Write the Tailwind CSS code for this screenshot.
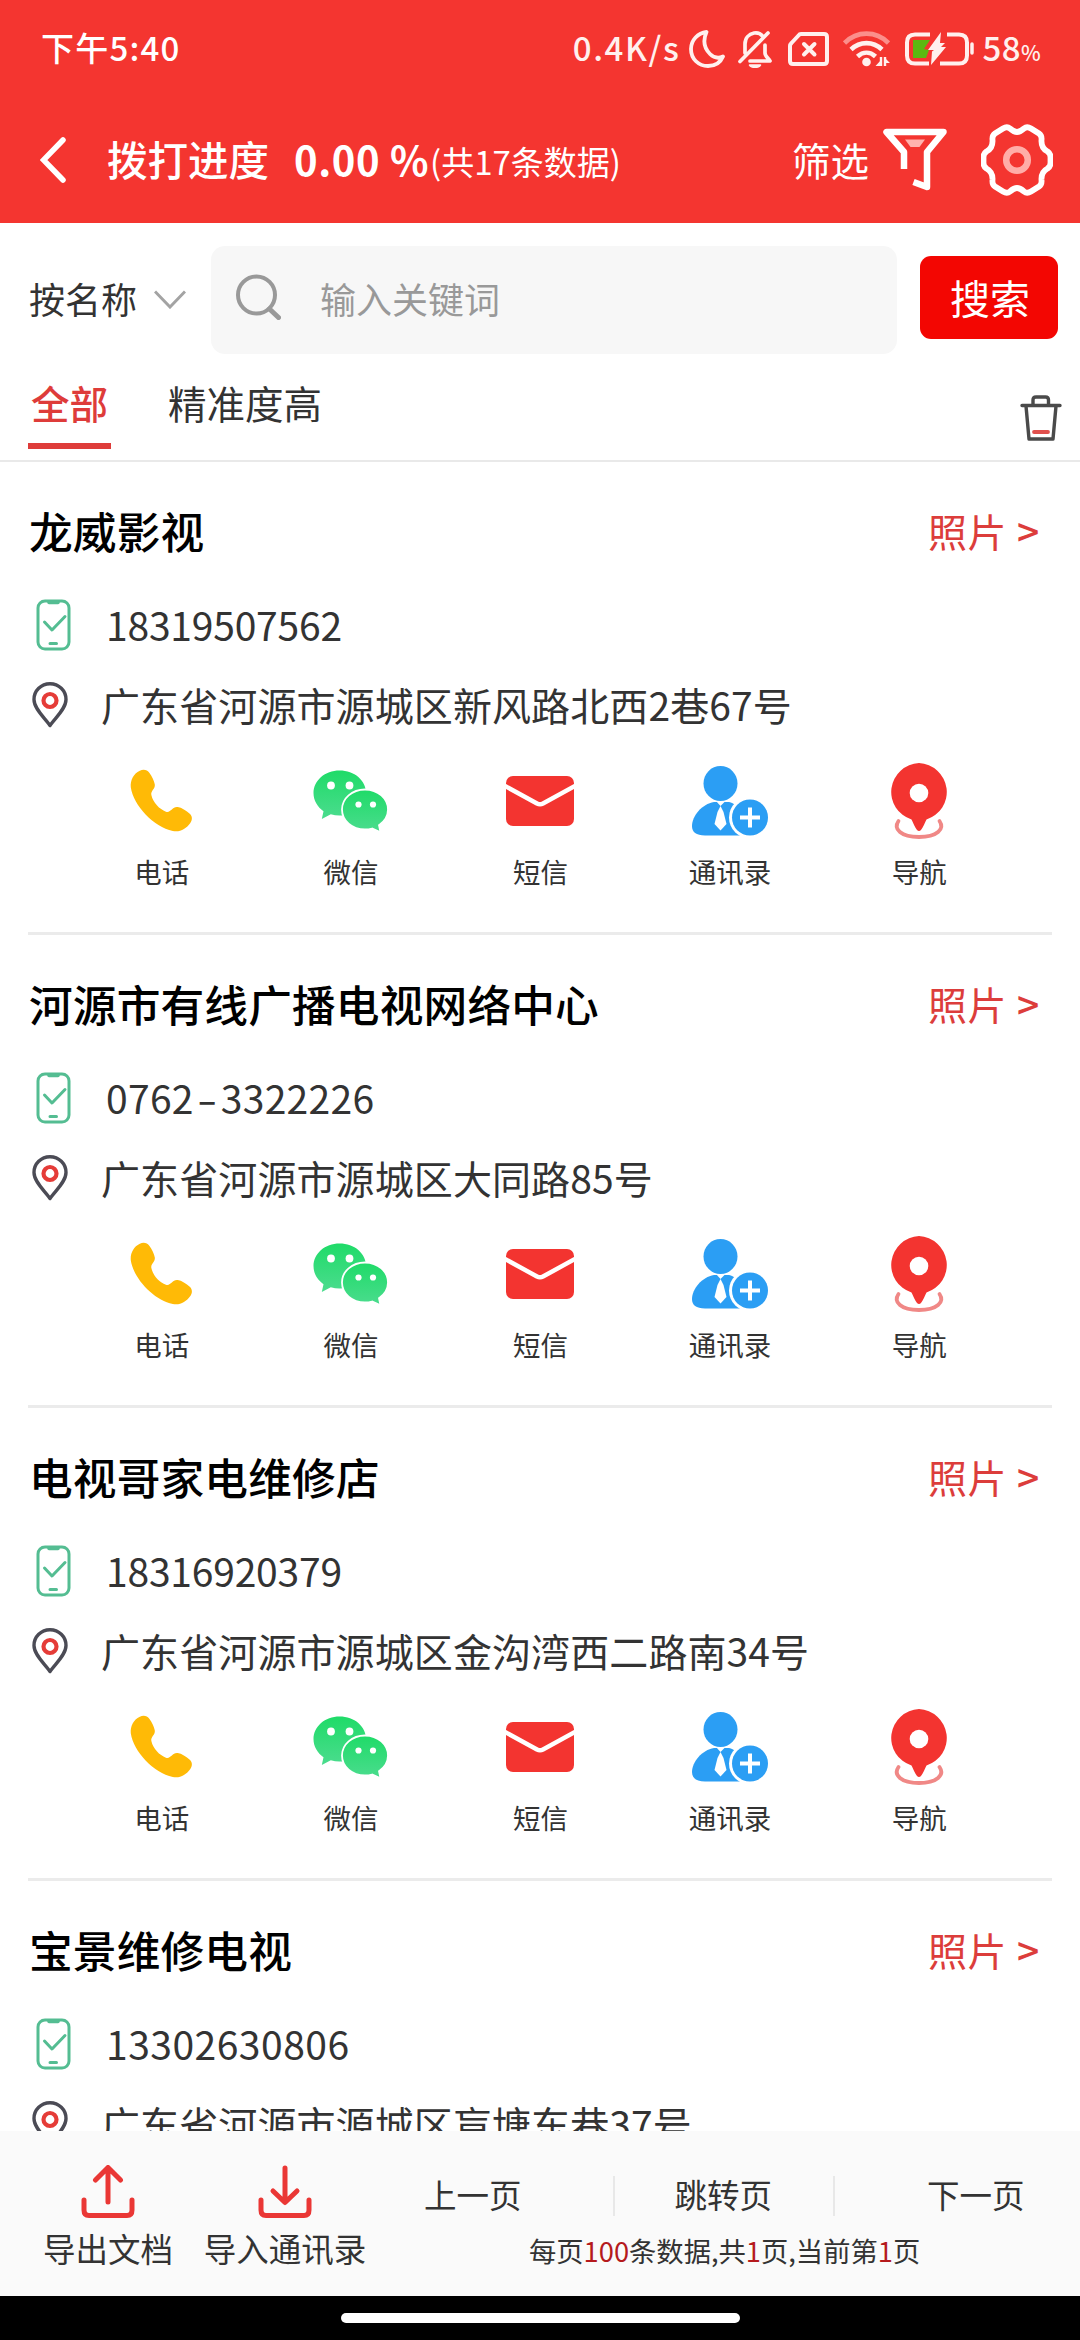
<!DOCTYPE html>
<html lang="zh-CN">
<head>
<meta charset="utf-8">
<title>拨打进度</title>
<script src="https://cdn.jsdelivr.net/npm/@tailwindcss/browser@4"></script>
</head>
<body class="w-[1080px] h-[2340px] overflow-hidden bg-white text-[#333] font-['Noto_Sans_CJK_SC',sans-serif]">
<svg class="absolute size-0">
  <defs><linearGradient id="wg" x1="0" y1="0" x2="0" y2="1"><stop offset="0" stop-color="#1fdb68"/><stop offset="1" stop-color="#4bdc8e"/></linearGradient></defs>
  <symbol id="phone-ok" viewBox="0 0 36 52"><g fill="none" stroke="#54bd92" stroke-width="3" stroke-linecap="round" stroke-linejoin="round"><rect x="2" y="2" width="31" height="48" rx="7"/><path d="M8.5 23l7.500 8L29 17.500M14 44.500h6.500"/><path d="M13 3.500h9" stroke-width="3.500"/></g></symbol>
  <symbol id="pin" viewBox="0 0 36 46"><path d="M18 43.500C13 36 2 27 2 17.500a16 15.800 0 0 1 32 0C34 27 23 36 18 43.500z" fill="none" stroke="#4b4b55" stroke-width="3.400" stroke-linejoin="round"/><circle cx="18" cy="18.500" r="6.500" fill="none" stroke="#e53c38" stroke-width="4.200"/></symbol>
  <symbol id="call" viewBox="0 0 64 64"><path d="M10 1.200c4-1.700 7.500-.700 9.800 2.300 2.600 3.500 4.800 8 5.400 11.800.6 4.600-4.400 6.200-3.500 10.700C23.500 34 30 40.500 36.500 42.800c5 1.700 6.400-5.400 12-4.600 3.800.6 8.800 3.600 12.200 6.800 3 2.800 2.600 6.400.600 9.400C57 60.500 50.500 64 43.500 62.500 24 58.500 3.500 36.500.800 18 .200 11 3.500 4.200 10 1.200z" fill="#ffba06"/></symbol>
  <symbol id="wechat" viewBox="0 0 76 62"><path d="M26.500.500C12 .500.500 10.500.500 23c0 7.500 4 14 10 18.200L8.800 49l9-4.700c2.800.8 5.700 1.200 8.700 1.200 15 0 26.500-10 26.500-22.500S41.500.500 26.500.500z" fill="url(#wg)"/><path d="M52 19.500c-13 0-23 8.900-23 20s10 20 23 20c2.500 0 5-.4 7.200-1l8.300 3.800-1.500-7.100c5.500-3.700 9-9.300 9-15.700 0-11.100-10-20-23-20z" fill="url(#wg)" stroke="#fff" stroke-width="1.800"/><g fill="#fff"><circle cx="18" cy="15.500" r="3.900"/><circle cx="36.500" cy="15.500" r="3.900"/><circle cx="45.500" cy="34.500" r="3.100"/><circle cx="60" cy="34.500" r="3.100"/></g></symbol>
  <symbol id="mail" viewBox="0 0 68 50"><rect width="68" height="50" rx="7" fill="#f33430"/><path d="M-1 10L31 27.500q3 1.600 6 0L69 10" fill="none" stroke="#fff" stroke-width="4.500"/></symbol>
  <symbol id="contact" viewBox="0 0 76 70"><g fill="#2b9ef4"><ellipse cx="28.500" cy="17.500" rx="17" ry="17.500"/><path d="M22 36h15c5 1 9 5 12 10v23.500H13C4 69.500 0 66 0 60c0-10 10-22 22-24z"/></g><path d="M24 35l4.500 5 5-5z" fill="#fff"/><path d="M28.500 40l3 6 3 12-6 6.500L22.500 58l3-12z" fill="#fff"/><circle cx="58" cy="51.500" r="21" fill="#fff"/><circle cx="58" cy="51.500" r="18" fill="#2b9ef4"/><path d="M58 41.500v20M48 51.500h20" stroke="#fff" stroke-width="4"/></symbol>
  <symbol id="nav" viewBox="0 0 60 76"><path d="M9.500 58C4 66 12 74 30 74s26-8 20.500-16" fill="none" stroke="#f08886" stroke-width="3.800" stroke-linecap="round"/><path d="M30 0a29.500 29 0 0 1 7.500 56.500c-1.500 3-3.500 8-5.500 10.500q-2 2-4 0c-2-2.500-4-7.500-5.500-10.500A29.500 29 0 0 1 30 0z" fill="#f33430"/><circle cx="30" cy="30" r="9.300" fill="#fff"/></symbol>
</svg>

<header class="h-[223px] bg-[#f43530] text-white flex flex-col">
  <div class="h-[97px] pl-[41px] pr-[39px] flex items-center justify-between text-[33px] font-medium leading-none">
    <span class="tracking-[1.2px] -mt-[2px]">下午5:40</span>
    <div class="flex items-center text-[#fff0ee]">
      <span class="tracking-[1.6px] mr-[9px] -mt-[2px]">0.4K/s</span>
      <svg class="w-[36px] h-[38px] mr-[12px]" viewBox="0 0 36 38" fill="none" stroke="currentColor" stroke-width="3.800" stroke-linejoin="round"><path d="M17.500 2C9 3 2 10 2 19c0 10 7.500 17 17 17 7 0 12.500-3.500 15-9.500-4 2-9 1.500-13-2.500C15 18 14 10 17.500 2z"/></svg>
      <svg class="w-[36px] h-[38px] mr-[15px]" viewBox="0 0 36 38" fill="none" stroke="currentColor" stroke-width="3.700" stroke-linecap="round" stroke-linejoin="round"><path d="M31 3L3 31.500M8 23v-9c0-6 4-10 9-11 3-.5 6.500.5 8.500 3M28 15v8c0 3 3 5 5 8H13"/><path d="M12.500 35h11c-2 3-9 3-11 0z" fill="currentColor" stroke-width="1.500"/></svg>
      <svg class="w-[41px] h-[34px] mr-[14px]" viewBox="0 0 41 34" fill="none" stroke="currentColor" stroke-width="4" stroke-linejoin="round"><path d="M13 2h23q3 0 3 3v24q0 3-3 3H5q-3 0-3-3V14q0-1.500 1.500-3L10.500 3.500Q11.500 2 13 2z"/><path d="M16 12l10.500 10.500M26.500 12L16 22.500" stroke-linecap="round"/></svg>
      <svg class="w-[47px] h-[36px] mr-[15px]" viewBox="0 0 47 36" fill="none" stroke="currentColor" stroke-width="4.600"><path d="M1.500 12C14-.500 33-.500 45.500 12" stroke="#fb8f8b"/><path d="M8 18.500c9-8.500 22-8.500 31 0M14.500 25.500c5.500-5 12.500-5 18 0"/><circle cx="23.500" cy="31" r="4.300" fill="currentColor" stroke="none"/><path d="M38 26v9M42 26v9" stroke-width="2.400"/><path d="M38.500 35h-6l6-6.500zM41 26l6 6h-6z" fill="currentColor" stroke="none"/></svg>
      <svg class="w-[69px] h-[34px] mr-[8px]" viewBox="0 0 69 34" fill="none" stroke="currentColor" stroke-width="4"><path d="M25 2.500H10q-8 0-8 8v13q0 8 8 8h14M42 2.500h12q8 0 8 8v13q0 8-8 8H35"/><path d="M67 12v9" stroke-linecap="round" stroke-width="3.500"/><path d="M8 8h17l-6 9 5 1-3 8H8z" fill="#5cb811" stroke="none"/><path d="M36 0L23 18h6l-2 1.500L26 33l15-18h-5l4-4h-5z" fill="currentColor" stroke="none"/></svg>
      <span class="tracking-[0.4px] -mt-[2px]">58<span class="text-[21px]">%</span></span>
    </div>
  </div>
  <div class="h-[125px] pl-[40px] pr-[27px] flex items-center leading-none">
    <svg class="w-[27px] h-[46px] mr-[40px]" viewBox="0 0 27 46" fill="none" stroke="#fff" stroke-width="5.500" stroke-linecap="round"><path d="M23 3L3.500 23 23 43"/></svg>
    <h1 class="text-[40.500px] font-medium -mt-[1px]">拨打进度</h1>
    <span class="text-[40px] font-bold ml-[25px] whitespace-nowrap tracking-[0.6px] -mt-[1px]">0.00 %</span>
    <span class="text-[33px] whitespace-nowrap mt-[3px] ml-[1px]">(共17条数据)</span>
    <span class="text-[38.500px] ml-auto mr-[14px] -mt-[1px]">筛选</span>
    <svg class="w-[64px] h-[64px] mr-[34px]" viewBox="0 0 64 64" fill="none" stroke="#fff" stroke-width="6.500"><path d="M21 41V24L3.500 4h57L44 24v35L30.500 54" stroke-linejoin="round"/><path d="M22 11.500h20l-5.500 7.500h-9z" fill="#ffb3ae" stroke="none"/></svg>
    <svg class="w-[72px] h-[72px]" viewBox="0 0 72 72" fill="none"><path d="M29 4.500q4 3.500 7 3.500t7-3.500q3-2.500 7 0l8 5q3 2 2.500 6.500-.5 8 6 11.500 3 2 3 5.500v6q0 3.500-3 5.500-6.500 3.500-6 11.500.5 4.500-2.500 6.500l-8 5q-4 2.500-7 0-4-3.500-7-3.500t-7 3.500q-3 2.500-7 0l-8-5q-3-2-2.500-6.500.5-8-6-11.500-3-2-3-5.500v-6q0-3.500 3-5.500 6.500-3.500 6-11.500-.5-4.500 2.500-6.500l8-5q4-2.500 7 0z" stroke="#fff" stroke-width="5.800"/><circle cx="36" cy="36" r="10.800" stroke="#ffada8" stroke-width="6.500"/></svg>
  </div>
</header>

<section class="h-[131px] pt-[23px] pl-[29px] pr-[22px] flex text-[36px] leading-none">
  <div class="flex items-center h-[108px] w-[182px]">
    <span class="-mt-[5px]">按名称</span>
    <svg class="w-[32px] h-[19px] ml-[17px] -mt-[2px]" viewBox="0 0 32 19" fill="none" stroke="#a3a3a3" stroke-width="3"><path d="M1 1.500L16 17 31 1.500"/></svg>
  </div>
  <div class="w-[686px] h-[108px] rounded-[14px] bg-[#f7f7f7] flex items-center pl-[25px] text-[#999]">
    <svg class="w-[45px] h-[46px] mr-[39px] -mt-[6px]" viewBox="0 0 45 46" fill="none" stroke="#999" stroke-width="4"><circle cx="20.500" cy="21" r="18.500"/><path d="M33.500 35l9 8.500" stroke-width="5" stroke-linecap="round"/></svg>
    <span class="-mt-[5px]">输入关键词</span>
  </div>
  <button class="ml-[23px] mt-[10px] w-[138px] h-[83px] rounded-[11px] bg-[#f30602] text-white text-[40px] leading-[79px] pl-[2px]">搜索</button>
</section>

<nav class="h-[108px] border-b-[2px] border-[#e9e9e9] pl-[28px] pr-[18px] flex text-[38.500px]">
  <div class="w-[83px] h-[95px] border-b-[6px] border-[#de3c3a] text-[#de3c3a] text-center font-medium leading-[96px]">全部</div>
  <div class="ml-[57px] leading-[96px]">精准度高</div>
  <svg class="w-[42px] h-[46px] ml-auto mt-[41px]" viewBox="0 0 42 46" fill="none" stroke="#4a4a4a" stroke-width="3.400" stroke-linecap="round" stroke-linejoin="round"><path d="M2 10.500h38M6 11l3 33h24l3-33M13 10V5q0-3 3-3h9.500q3 0 3 3v5"/><path d="M14 37h14" stroke="#e0504d" stroke-width="3.800"/></svg>
</nav>

<main id="list" class="h-[1669px] overflow-hidden px-[28px]"></main>

<footer class="h-[165px] bg-[#fafafa] flex text-[32.500px] leading-none whitespace-nowrap">
  <div class="w-[216px] pt-[34px] flex flex-col items-center">
    <svg class="w-[54px] h-[53px]" viewBox="0 0 54 53" fill="none" stroke="#ea3735" stroke-width="5" stroke-linecap="round" stroke-linejoin="round"><path d="M27 37V3M14.500 15L27 2.500 39.500 15M3 35v10q0 5.500 5 5.500h38q5 0 5-5.500V35"/></svg>
    <span class="mt-[14px]">导出文档</span>
  </div>
  <div class="w-[138px] pt-[34px] flex flex-col items-center">
    <svg class="w-[54px] h-[53px]" viewBox="0 0 54 53" fill="none" stroke="#ea3735" stroke-width="5" stroke-linecap="round" stroke-linejoin="round"><path d="M27 3v34M15 26l12 11.500L39 26M3 35v10q0 5.500 5 5.500h38q5 0 5-5.500V35"/></svg>
    <span class="mt-[14px]">导入通讯录</span>
  </div>
  <div class="w-[726px] pt-[45px]">
    <div class="flex items-center h-[40px]">
      <span class="ml-[70px] -mt-[3px]">上一页</span>
      <i class="ml-[91px] w-[2px] h-[40px] bg-[#e8e8e8]"></i>
      <span class="ml-[60px] -mt-[3px]">跳转页</span>
      <i class="ml-[61px] w-[2px] h-[40px] bg-[#e8e8e8]"></i>
      <span class="ml-[92px] -mt-[3px]">下一页</span>
    </div>
    <p class="mt-[21px] ml-[175px] text-[27.300px]">每页<span class="text-[#b51a1d]">100</span>条数据,共<span class="text-[#b51a1d]">1</span>页,当前第<span class="text-[#b51a1d]">1</span>页</p>
  </div>
</footer>
<div class="h-[44px] bg-black pt-[17px]"><div class="mx-auto w-[399px] h-[10px] rounded-full bg-white"></div></div>

<script>
const shops = [
  ['龙威影视', '18319507562', '广东省河源市源城区新风路北西2巷67号', 'tracking-[-0.2px]'],
  ['河源市有线广播电视网络中心', '0762<span class="inline-block w-[27px] text-center scale-x-150">-</span>3322226', '广东省河源市源城区大同路85号', 'tracking-[0.3px]'],
  ['电视哥家电维修店', '18316920379', '广东省河源市源城区金沟湾西二路南34号', 'tracking-[-0.2px]'],
  ['宝景维修电视', '13302630806', '广东省河源市源城区盲塘东巷37号', 'tracking-[0.5px]'],
];
document.getElementById('list').innerHTML = shops.map(([name, tel, addr, spacing]) => `
<article class="h-[473px] border-b-[3px] border-[#ebebeb] leading-none whitespace-nowrap">
  <div class="h-[138px] pl-[1px] pr-[13px] flex items-center justify-between">
    <h2 class="text-[43.700px] text-black font-medium tracking-[0.15px] -mt-[1px]">${name}</h2>
    <span class="text-[39px] text-[#dc3d3b] flex items-center -mt-[2px] tracking-[0.5px]">照片<span class="ml-[10px] w-[22px] font-medium">&gt;</span></span>
  </div>
  <div class="h-[50px] flex items-center">
    <svg class="w-[36px] h-[52px] ml-[8px] mr-[34px]"><use href="#phone-ok"/></svg>
    <span class="text-[39px] -mt-[2px] ${spacing}">${tel}</span>
  </div>
  <div class="mt-[32px] h-[46px] flex items-center">
    <svg class="w-[36px] h-[46px] ml-[4px] mr-[33px]"><use href="#pin"/></svg>
    <span class="text-[39px] -mt-[2px] tracking-[0.1px]">${addr}</span>
  </div>
  <div class="mt-[34px] ml-[39px] w-[947px] grid grid-cols-5 text-[27.500px] text-center">
    <div class="flex flex-col items-center"><div class="h-[78px] flex items-center"><svg class="w-[63px] h-[64px]"><use href="#call"/></svg></div><span class="mt-[18px]">电话</span></div>
    <div class="flex flex-col items-center"><div class="h-[78px] flex items-center"><svg class="w-[76px] h-[62px]"><use href="#wechat"/></svg></div><span class="mt-[18px]">微信</span></div>
    <div class="flex flex-col items-center"><div class="h-[78px] flex items-center"><svg class="w-[68px] h-[50px]"><use href="#mail"/></svg></div><span class="mt-[18px]">短信</span></div>
    <div class="flex flex-col items-center"><div class="h-[78px] flex items-center"><svg class="w-[76px] h-[70px]"><use href="#contact"/></svg></div><span class="mt-[18px]">通讯录</span></div>
    <div class="flex flex-col items-center"><div class="h-[78px] flex items-center"><svg class="w-[60px] h-[76px]"><use href="#nav"/></svg></div><span class="mt-[18px]">导航</span></div>
  </div>
</article>`).join('');
</script>
</body>
</html>
